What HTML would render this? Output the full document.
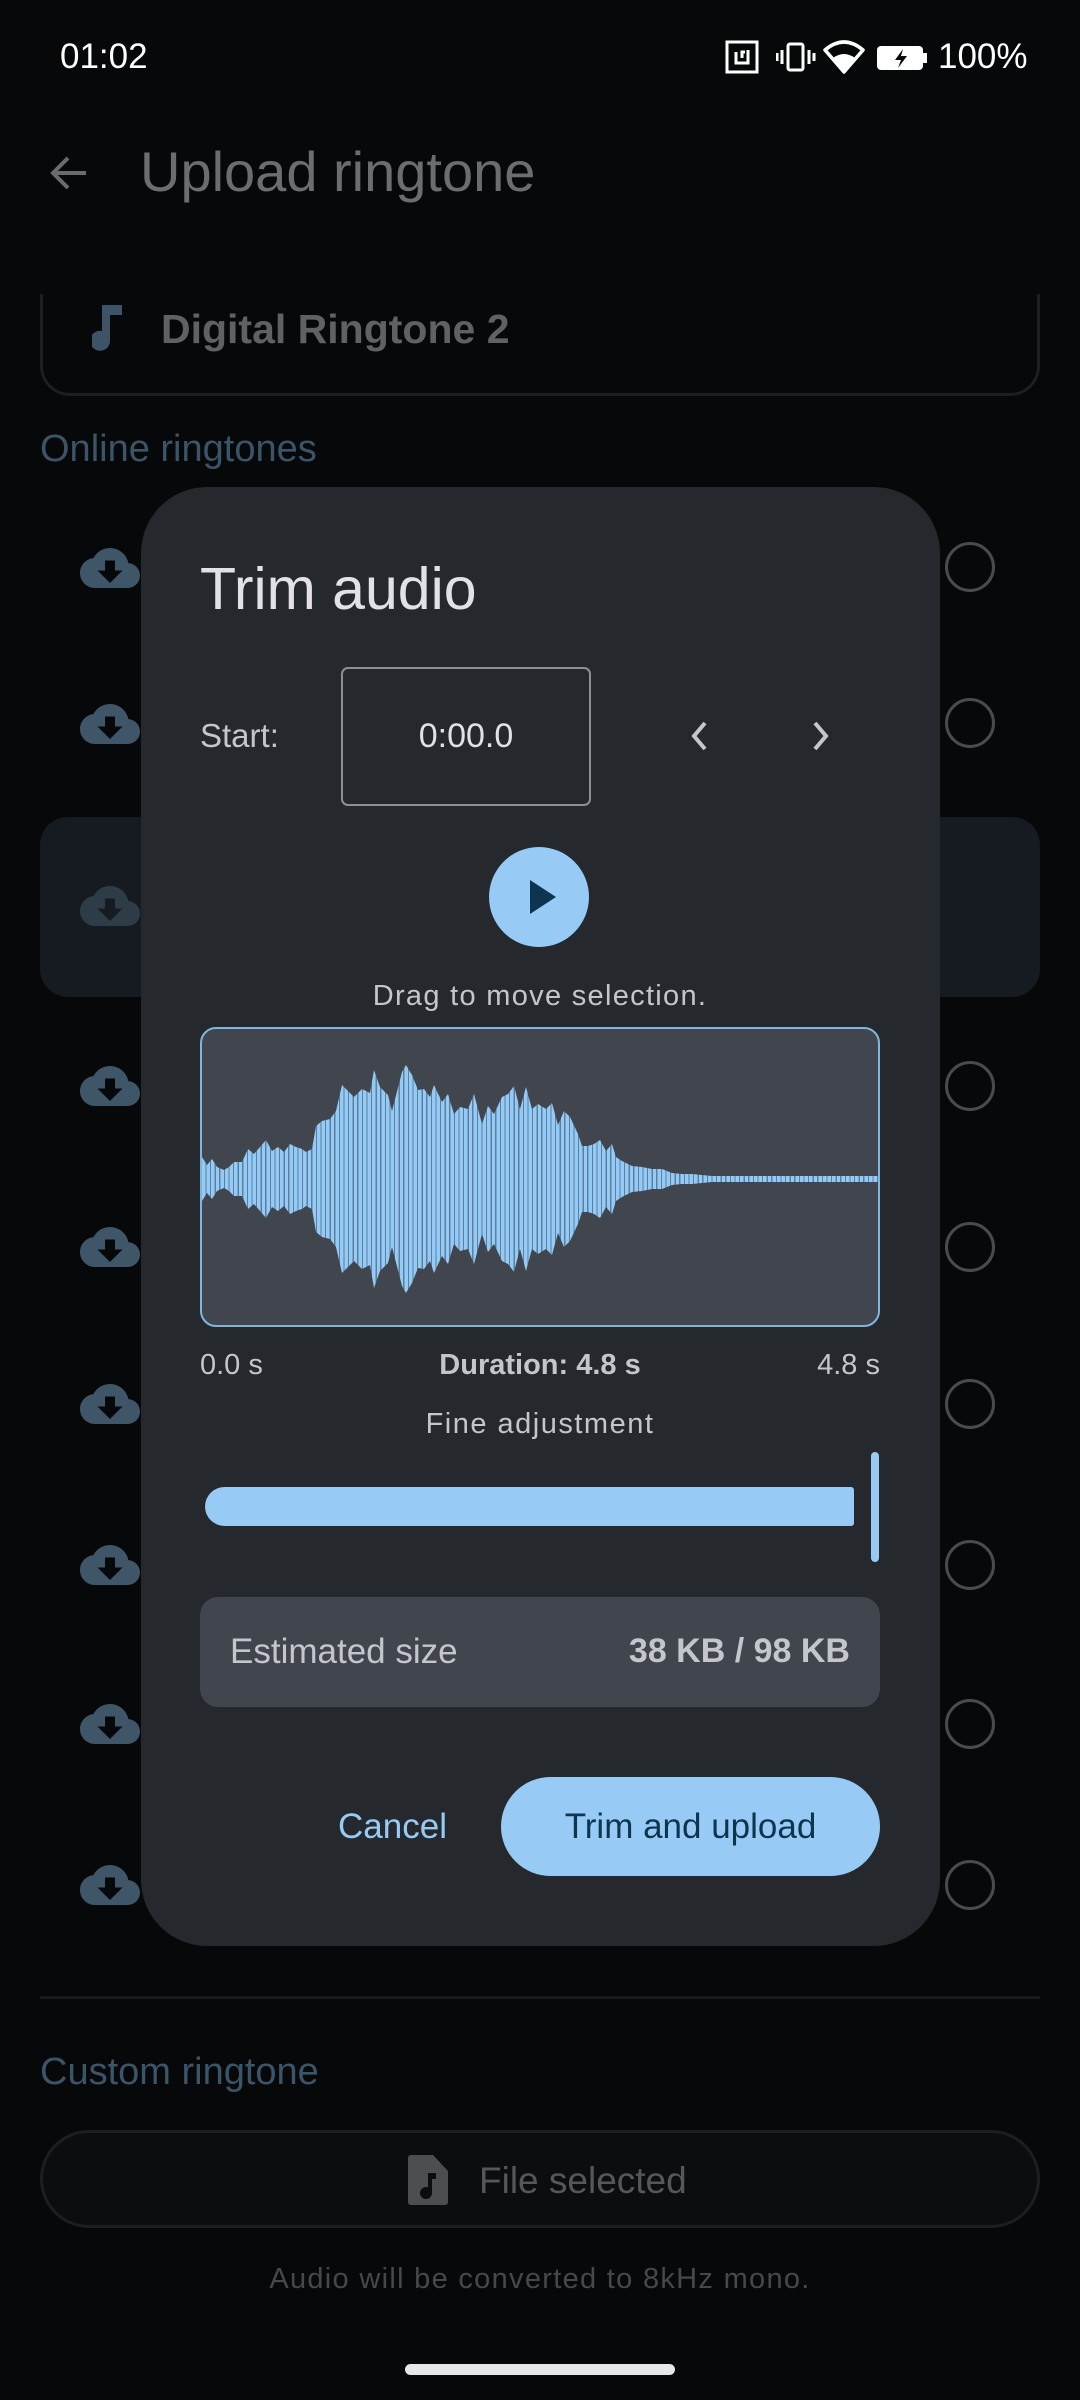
<!DOCTYPE html>
<html><head><meta charset="utf-8"><style>
*{margin:0;padding:0;box-sizing:border-box}
body{width:1080px;height:2400px;background:#070809;position:relative;overflow:hidden;font-family:"Liberation Sans",sans-serif}
.a{position:absolute}
.t{position:absolute;white-space:nowrap;line-height:1}
.radio{position:absolute;left:945px;width:50px;height:50px;border:3.5px solid #4a4b4d;border-radius:50%}
.cloud{position:absolute;left:80px;width:60px;height:60px}
</style></head><body>

<!-- status bar -->
<div class="t" style="left:60px;top:39px;font-size:35px;color:#fff">01:02</div>
<svg class="a" style="left:725px;top:40px" width="36" height="34" viewBox="0 0 36 34"><rect x="2" y="2" width="30" height="30" fill="none" stroke="#fff" stroke-width="3"/><path d="M11 12v11h12V10" fill="none" stroke="#fff" stroke-width="3"/><path d="M17 18v-6h3" fill="none" stroke="#fff" stroke-width="3"/></svg>
<svg class="a" style="left:776px;top:40px" width="40" height="34" viewBox="0 0 40 34"><rect x="12" y="4" width="15" height="26" rx="2" fill="none" stroke="#fff" stroke-width="3"/><path d="M6 10v14M1 13v8M33 10v14M38 13v8" stroke="#fff" stroke-width="3"/></svg>
<svg class="a" style="left:823px;top:40px" width="42" height="34" viewBox="0 0 42 34"><path d="M2 10 Q21 -6 40 10 L21 32 Z" fill="none" stroke="#fff" stroke-width="3.5" stroke-linejoin="round"/><path d="M10 18 Q21 10 32 18 L21 31Z" fill="#fff"/></svg>
<svg class="a" style="left:877px;top:44px" width="54" height="28" viewBox="0 0 54 28"><rect x="0" y="2" width="46" height="24" rx="4" fill="#fff"/><rect x="46" y="9" width="4" height="10" fill="#fff"/><path d="M26 5 L18 16 H24 L21 24 L30 12 H24Z" fill="#070809"/></svg>
<div class="t" style="left:938px;top:39px;font-size:35px;color:#fff">100%</div>

<!-- app bar -->
<svg class="a" style="left:46px;top:151px" width="46" height="44" viewBox="0 0 46 44"><path d="M40 22H8M22 7 7 22l15 15" fill="none" stroke="#6a6b6d" stroke-width="4"/></svg>
<div class="t" style="left:140px;top:144px;font-size:56px;color:#6c6d70">Upload ringtone</div>

<!-- card -->
<div class="a" style="left:40px;top:260px;width:1000px;height:136px;border:3px solid #1d1f22;border-top:none;border-radius:0 0 30px 30px"></div>
<div class="a" style="left:0;top:230px;width:1080px;height:64px;background:#070809"></div>
<svg class="a" style="left:92px;top:303px" width="34" height="50" viewBox="0 0 34 50"><path d="M10 2h20v10H18v26a10 10 0 1 1-8-10Z" fill="#3e5466"/></svg>
<div class="t" style="left:161px;top:309px;font-size:41px;color:#5f6163;font-weight:bold">Digital Ringtone 2</div>

<div class="t" style="left:40px;top:430px;font-size:38px;color:#3b5467">Online ringtones</div>

<!-- list -->
<div class="a" style="left:40px;top:817px;width:1000px;height:180px;background:#151b21;border-radius:28px"></div>
<svg class="cloud" style="top:538px" viewBox="0 0 24 24"><path d="M19.35 10.04C18.67 6.59 15.64 4 12 4 9.11 4 6.64 5.640 5.35 8.04 2.34 8.36 0 10.91 0 14c0 3.31 2.69 6 6 6h13c2.76 0 5-2.24 5-5 0-2.64-2.05-4.78-4.65-4.96zM17 13l-5 5-5-5h3V9h4v4h3z" fill="#3e5668"/></svg>
<svg class="cloud" style="top:694px" viewBox="0 0 24 24"><path d="M19.35 10.04C18.67 6.59 15.64 4 12 4 9.11 4 6.64 5.64 5.35 8.04 2.34 8.36 0 10.91 0 14c0 3.31 2.69 6 6 6h13c2.76 0 5-2.24 5-5 0-2.64-2.05-4.78-4.65-4.96zM17 13l-5 5-5-5h3V9h4v4h3z" fill="#3e5668"/></svg>
<svg class="cloud" style="top:876px" viewBox="0 0 24 24"><path d="M19.35 10.04C18.67 6.59 15.64 4 12 4 9.11 4 6.64 5.64 5.35 8.04 2.34 8.36 0 10.91 0 14c0 3.31 2.69 6 6 6h13c2.76 0 5-2.24 5-5 0-2.64-2.05-4.78-4.65-4.96zM17 13l-5 5-5-5h3V9h4v4h3z" fill="#2e3c47"/></svg>
<svg class="cloud" style="top:1056px" viewBox="0 0 24 24"><path d="M19.35 10.04C18.67 6.59 15.64 4 12 4 9.11 4 6.64 5.64 5.35 8.04 2.34 8.36 0 10.91 0 14c0 3.31 2.69 6 6 6h13c2.76 0 5-2.24 5-5 0-2.64-2.05-4.78-4.65-4.96zM17 13l-5 5-5-5h3V9h4v4h3z" fill="#3e5668"/></svg>
<svg class="cloud" style="top:1217px" viewBox="0 0 24 24"><path d="M19.35 10.04C18.67 6.59 15.64 4 12 4 9.11 4 6.64 5.64 5.35 8.04 2.34 8.36 0 10.91 0 14c0 3.31 2.69 6 6 6h13c2.76 0 5-2.24 5-5 0-2.64-2.05-4.78-4.65-4.96zM17 13l-5 5-5-5h3V9h4v4h3z" fill="#3e5668"/></svg>
<svg class="cloud" style="top:1374px" viewBox="0 0 24 24"><path d="M19.35 10.04C18.67 6.59 15.64 4 12 4 9.11 4 6.64 5.64 5.35 8.04 2.34 8.36 0 10.91 0 14c0 3.31 2.69 6 6 6h13c2.76 0 5-2.24 5-5 0-2.64-2.05-4.78-4.65-4.96zM17 13l-5 5-5-5h3V9h4v4h3z" fill="#3e5668"/></svg>
<svg class="cloud" style="top:1535px" viewBox="0 0 24 24"><path d="M19.35 10.04C18.67 6.59 15.64 4 12 4 9.11 4 6.64 5.64 5.35 8.04 2.34 8.36 0 10.91 0 14c0 3.31 2.69 6 6 6h13c2.76 0 5-2.24 5-5 0-2.64-2.05-4.78-4.65-4.96zM17 13l-5 5-5-5h3V9h4v4h3z" fill="#3e5668"/></svg>
<svg class="cloud" style="top:1694px" viewBox="0 0 24 24"><path d="M19.35 10.04C18.67 6.59 15.64 4 12 4 9.11 4 6.64 5.64 5.35 8.04 2.34 8.36 0 10.91 0 14c0 3.31 2.69 6 6 6h13c2.76 0 5-2.24 5-5 0-2.64-2.05-4.78-4.65-4.96zM17 13l-5 5-5-5h3V9h4v4h3z" fill="#3e5668"/></svg>
<svg class="cloud" style="top:1855px" viewBox="0 0 24 24"><path d="M19.35 10.04C18.67 6.59 15.64 4 12 4 9.11 4 6.64 5.64 5.35 8.04 2.34 8.36 0 10.91 0 14c0 3.31 2.69 6 6 6h13c2.76 0 5-2.24 5-5 0-2.64-2.05-4.78-4.65-4.96zM17 13l-5 5-5-5h3V9h4v4h3z" fill="#3e5668"/></svg>
<div class="radio" style="top:542px"></div>
<div class="radio" style="top:698px"></div>
<div class="radio" style="top:1061px"></div>
<div class="radio" style="top:1222px"></div>
<div class="radio" style="top:1379px"></div>
<div class="radio" style="top:1540px"></div>
<div class="radio" style="top:1699px"></div>
<div class="radio" style="top:1860px"></div>

<!-- bottom section -->
<div class="a" style="left:40px;top:1996px;width:1000px;height:3px;background:#17191b"></div>
<div class="t" style="left:40px;top:2053px;font-size:38px;color:#3b5467">Custom ringtone</div>
<div class="a" style="left:40px;top:2130px;width:1000px;height:98px;border:3px solid #1c1e21;background:#0c0d0f;border-radius:49px"></div>
<svg class="a" style="left:408px;top:2155px" width="40" height="50" viewBox="0 0 40 50"><path d="M3 0h22l15 16v31a3 3 0 0 1-3 3H3a3 3 0 0 1-3-3V3a3 3 0 0 1 3-3Z" fill="#4c4e51"/><path d="M20 18h8v6h-4v14a6 6 0 1 1-4-5.6Z" fill="#0c0d0f"/></svg>
<div class="t" style="left:479px;top:2162px;font-size:37px;color:#55575a">File selected</div>
<div class="t" style="left:0;width:1080px;text-align:center;top:2265px;font-size:29px;color:#46484b;letter-spacing:1.3px">Audio will be converted to 8kHz mono.</div>
<div class="a" style="left:405px;top:2364px;width:270px;height:11px;background:#e6e8e8;border-radius:6px"></div>

<!-- dialog -->
<div class="a" style="left:141px;top:487px;width:799px;height:1459px;background:#25282d;border-radius:66px"></div>
<div class="t" style="left:200px;top:560px;font-size:59px;color:#e2e2e6">Trim audio</div>
<div class="t" style="left:200px;top:719px;font-size:33px;color:#c4c6cc">Start:</div>
<div class="a" style="left:341px;top:667px;width:250px;height:139px;border:2.5px solid #8c9096;border-radius:7px"></div>
<div class="t" style="left:341px;width:250px;text-align:center;top:719px;font-size:34px;color:#e2e2e6">0:00.0</div>
<svg class="a" style="left:688px;top:720px" width="24" height="32" viewBox="0 0 24 32"><path d="M17 3 6 16l11 13" fill="none" stroke="#c4c6cc" stroke-width="4"/></svg>
<svg class="a" style="left:808px;top:720px" width="24" height="32" viewBox="0 0 24 32"><path d="M7 3l11 13L7 29" fill="none" stroke="#c4c6cc" stroke-width="4"/></svg>
<div class="a" style="left:489px;top:847px;width:100px;height:100px;border-radius:50%;background:#97cbf5"></div>
<svg class="a" style="left:528px;top:878px" width="30" height="38" viewBox="0 0 30 38"><path d="M2 2 28 19 2 36Z" fill="#0d3550"/></svg>
<div class="t" style="left:0;width:1080px;text-align:center;top:982px;font-size:29px;color:#c4c6cc;letter-spacing:1.3px">Drag to move selection.</div>

<div class="a" style="left:200px;top:1027px;width:680px;height:300px;background:#41454d;border:2px solid #7fb6e0;border-radius:16px;overflow:hidden">
<div class="a" style="left:0;top:0;width:679px;height:300px;background:repeating-linear-gradient(90deg,#94cbf6 0 3.4px,#5d7f9c 3.4px 4.6px);clip-path:polygon(0px 128px,5px 136px,10px 130px,15px 138px,22px 141px,27px 138px,32px 133px,40px 133px,46px 120px,52px 125px,58px 118px,64px 111px,70px 122px,76px 118px,82px 123px,88px 115px,94px 118px,100px 120px,104px 123px,110px 120px,114px 97px,120px 92px,128px 90px,134px 82px,140px 56px,146px 62px,152px 68px,160px 60px,168px 64px,172px 41px,178px 58px,186px 66px,190px 82px,200px 43px,204px 36px,210px 46px,216px 61px,222px 60px,228px 68px,232px 56px,240px 73px,246px 65px,252px 85px,258px 78px,266px 80px,272px 65px,280px 95px,286px 77px,292px 85px,300px 68px,306px 65px,312px 57px,318px 80px,324px 58px,330px 80px,336px 75px,344px 80px,350px 74px,356px 96px,362px 82px,368px 88px,376px 105px,380px 117px,386px 117px,392px 115px,398px 111px,404px 122px,410px 115px,414px 128px,420px 132px,430px 137px,440px 138px,450px 140px,460px 140px,470px 144px,480px 145px,490px 145px,500px 146px,510px 147px,679px 147px,679px 153px,510px 153px,500px 154px,490px 155px,480px 155px,470px 156px,460px 160px,450px 160px,440px 162px,430px 163px,420px 168px,414px 172px,410px 185px,404px 178px,398px 189px,392px 185px,386px 183px,380px 183px,376px 195px,368px 212px,362px 218px,356px 204px,350px 226px,344px 220px,336px 225px,330px 220px,324px 242px,318px 220px,312px 243px,306px 235px,300px 232px,292px 215px,286px 223px,280px 205px,272px 235px,266px 220px,258px 222px,252px 215px,246px 235px,240px 227px,232px 244px,228px 232px,222px 240px,216px 239px,210px 254px,204px 264px,200px 257px,190px 218px,186px 234px,178px 242px,172px 259px,168px 236px,160px 240px,152px 232px,146px 238px,140px 244px,134px 218px,128px 210px,120px 208px,114px 203px,110px 180px,104px 177px,100px 180px,94px 182px,88px 185px,82px 177px,76px 182px,70px 178px,64px 189px,58px 182px,52px 175px,46px 180px,40px 167px,32px 167px,27px 162px,22px 159px,15px 162px,10px 170px,5px 164px,0px 172px)"></div>
</div>

<div class="t" style="left:200px;top:1351px;font-size:29px;color:#c4c6cc">0.0 s</div>
<div class="t" style="left:0;width:1080px;text-align:center;top:1351px;font-size:29px;color:#c4c6cc;font-weight:bold">Duration: 4.8 s</div>
<div class="t" style="left:700px;width:180px;text-align:right;top:1351px;font-size:29px;color:#c4c6cc">4.8 s</div>
<div class="t" style="left:0;width:1080px;text-align:center;top:1410px;font-size:29px;color:#c4c6cc;letter-spacing:1.5px">Fine adjustment</div>
<div class="a" style="left:205px;top:1487px;width:649px;height:39px;background:#97cbf5;border-radius:20px 3px 3px 20px"></div>
<div class="a" style="left:871px;top:1452px;width:8px;height:110px;background:#97cbf5;border-radius:4px"></div>
<div class="a" style="left:200px;top:1597px;width:680px;height:110px;background:#41454d;border-radius:18px"></div>
<div class="t" style="left:230px;top:1634px;font-size:35px;color:#c4c6cc">Estimated size</div>
<div class="t" style="left:500px;width:350px;text-align:right;top:1634px;font-size:34px;color:#c4c6cc;font-weight:bold">38 KB / 98 KB</div>
<div class="t" style="left:300px;width:185px;text-align:center;top:1809px;font-size:35px;color:#97cbf5">Cancel</div>
<div class="a" style="left:501px;top:1777px;width:379px;height:99px;background:#97cbf5;border-radius:50px"></div>
<div class="t" style="left:501px;width:379px;text-align:center;top:1809px;font-size:35px;color:#0d3550">Trim and upload</div>
</body></html>
